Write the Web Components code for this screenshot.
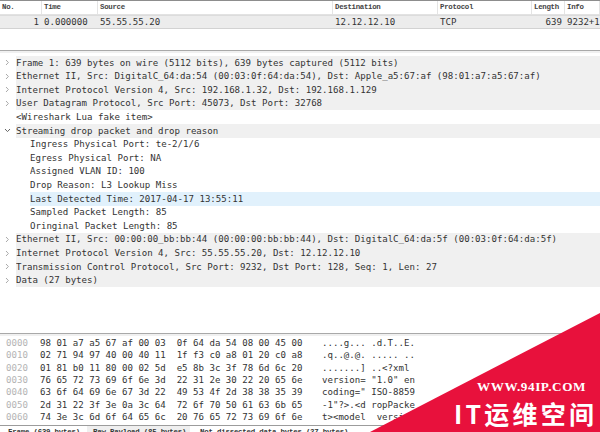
<!DOCTYPE html>
<html>
<head>
<meta charset="utf-8">
<style>
html, body { margin: 0; background: #fff; }
body { width: 600px; height: 432px; overflow: hidden; position: relative; }
</style>
</head>
<body>
<ws-app></ws-app>
<script>
const MONO = `"DejaVu Sans Mono", "Liberation Mono", monospace`;
const esc = s => s.replace(/&/g, '&amp;').replace(/</g, '&lt;').replace(/>/g, '&gt;');

class PacketList extends HTMLElement {
	constructor() {
		super();
		this.attachShadow({ mode: 'open' });
		const cols = ['No.', 'Time', 'Source', 'Destination', 'Protocol', 'Length', 'Info'];
		const vals = ['1', '0.000000', '55.55.55.20', '12.12.12.10', 'TCP', '639', '9232+1'];
		this.shadowRoot.innerHTML = `<style>
			:host { display: block; height: 50px; border-top: 1px solid #8d8d8d; box-sizing: border-box; overflow: hidden; }
			.row { display: grid; grid-template-columns: 42px 56px 235px 105px 94px 33px 35px; }
			.head { height: 14px; background: #fff; border-bottom: 1px solid #e2e2e2; box-sizing: border-box; }
			.head span { font: bold 7.4px/13px "Liberation Mono", monospace; letter-spacing: -.3px; color: #444; padding-left: 2px; border-right: 1px solid #e4e4e4; overflow: hidden; white-space: nowrap; }
			.sel { height: 14px; background: #ececec; border-top: 1px solid #dcdcdc; border-bottom: 1px solid #d2d2d2; box-sizing: border-box; }
			.sel span { font: 9.08px/12px ${MONO}; color: #333; padding-left: 2px; white-space: nowrap; overflow: hidden; }
			.sel .r, .head .r { text-align: right; padding: 0 3px 0 0; }
		</style>
		<div class="row head">${cols.map(c => `<span>${c}</span>`).join('')}</div>
		<div class="row sel">${vals.map((v, i) => `<span class="${i === 0 || i === 5 ? 'r' : ''}">${v}</span>`).join('')}</div>`;
	}
}
customElements.define('ws-packet-list', PacketList);

class Splitter extends HTMLElement {
	constructor() {
		super();
		this.attachShadow({ mode: 'open' });
		this.shadowRoot.innerHTML = `<style>
			:host { display: block; height: 3px; background: #f0f0f0; border-top: 1px solid #a9a9a9; box-sizing: border-box; }
		</style>`;
	}
}
customElements.define('ws-splitter', Splitter);

class TreeRow extends HTMLElement {
	constructor() {
		super();
		this.attachShadow({ mode: 'open' });
		this.shadowRoot.innerHTML = `<style>
			:host { display: flex; align-items: center; height: 13.6px; font: 9.08px/13.6px ${MONO}; color: #333; white-space: pre; }
			:host([tone="grey"]) .text { background: #f0f0f0; }
			:host([tone="blue"]) .text { background: #e1f1fc; }
			.arrow { width: 16px; flex: none; height: 13.6px; background: #fff; display: flex; align-items: center; }
			.text { flex: 1; height: 13.6px; box-sizing: border-box; padding-top: .7px; overflow: hidden; }
			:host([child]) .arrow { width: 30px; }
			svg { margin-left: 4px; }
		</style><div class="arrow"></div><div class="text"><slot></slot></div>`;
	}
	connectedCallback() {
		const arrow = this.shadowRoot.querySelector('.arrow');
		if (this.hasAttribute('child')) return;
		const open = this.hasAttribute('open');
		arrow.innerHTML = open
			? '<svg width="7" height="7" viewBox="0 0 7 7"><path d="M1 2 L3.5 4.6 L6 2" fill="none" stroke="#666" stroke-width="1"/></svg>'
			: '<svg width="7" height="7" viewBox="0 0 7 7"><path d="M2 1 L4.4 3.5 L2 6" fill="none" stroke="#aaa" stroke-width="1"/></svg>';
	}
}
customElements.define('ws-tree-row', TreeRow);

class PacketTree extends HTMLElement {
	constructor() {
		super();
		this.attachShadow({ mode: 'open' });
		this.shadowRoot.innerHTML = `<style>
			:host { display: block; height: 280px; padding-top: 3px; box-sizing: border-box; overflow: hidden; }
		</style><slot></slot>`;
	}
}
customElements.define('ws-packet-tree', PacketTree);

class HexView extends HTMLElement {
	constructor() {
		super();
		this.attachShadow({ mode: 'open' });
		const lines = [
			['0000', '98 01 a7 a5 67 af 00 03  0f 64 da 54 08 00 45 00', '....g... .d.T..E.'],
			['0010', '02 71 94 97 40 00 40 11  1f f3 c0 a8 01 20 c0 a8', '.q..@.@. ..... ..'],
			['0020', '01 81 b0 11 80 00 02 5d  e5 8b 3c 3f 78 6d 6c 20', '.......] ..<?xml '],
			['0030', '76 65 72 73 69 6f 6e 3d  22 31 2e 30 22 20 65 6e', 'version= "1.0" en'],
			['0040', '63 6f 64 69 6e 67 3d 22  49 53 4f 2d 38 38 35 39', 'coding=" ISO-8859'],
			['0050', '2d 31 22 3f 3e 0a 3c 64  72 6f 70 50 61 63 6b 65', '-1"?>.<d ropPacke'],
			['0060', '74 3e 3c 6d 6f 64 65 6c  20 76 65 72 73 69 6f 6e', 't><model  version']
		];
		this.shadowRoot.innerHTML = `<style>
			:host { display: block; height: 88px; padding-top: 1px; box-sizing: border-box; overflow: hidden; font: 9.08px/12.33px ${MONO}; color: #333; white-space: pre; }
			.line { display: flex; height: 12.33px; }
			.off { width: 40px; flex: none; box-sizing: border-box; padding-left: 6px; color: #b4b4b4; }
			.hex { width: 282px; flex: none; }
		</style>${lines.map(l => `<div class="line"><span class="off">${l[0]}</span><span class="hex">${l[1]}</span><span>${esc(l[2])}</span></div>`).join('')}`;
	}
}
customElements.define('ws-hex-view', HexView);

class ByteTabs extends HTMLElement {
	constructor() {
		super();
		this.attachShadow({ mode: 'open' });
		this.shadowRoot.innerHTML = `<style>
			:host { display: flex; height: 7px; margin-top: 1px; border-top: 1px solid #9c9c9c; box-sizing: border-box; overflow: hidden; background: #fff; font: bold 7.4px/11px "Liberation Mono", monospace; letter-spacing: -.2px; color: #333; white-space: nowrap; }
			span { padding: 1px 6px 0 8px; }
			.a { width: 87px; box-sizing: border-box; }
			.b { width: 103px; box-sizing: border-box; padding-left: 6px; background: #efefef; }
			.c { padding-left: 10px; background: #fff; }
		</style><span class="a">Frame (639 bytes)</span><span class="b">Raw Payload (85 bytes)</span><span class="c">Not dissected data bytes (27 bytes)</span>`;
	}
}
customElements.define('ws-byte-tabs', ByteTabs);

class Watermark extends HTMLElement {
	constructor() {
		super();
		this.attachShadow({ mode: 'open' });
		this.shadowRoot.innerHTML = `<style>
			:host { display: block; position: absolute; right: 0; bottom: 0; width: 230px; height: 119px; overflow: hidden; }
			.tri { position: absolute; inset: 0; background: #e8113c; clip-path: polygon(100% 0, 0 100%, 100% 100%); }
			.url { position: absolute; left: 107px; top: 67px; font: bold 13.2px/14px "Liberation Serif", serif; color: #fff; white-space: nowrap; letter-spacing: .55px; }
			.name { position: absolute; left: 84px; top: 83px; font: bold 25px/34px "Noto Sans CJK SC", sans-serif; color: #fff; white-space: nowrap; letter-spacing: 3.2px; }
		</style><div class="tri"></div><div class="url">WWW.94IP.COM</div><div class="name">IT运维空间</div>`;
	}
}
customElements.define('ws-watermark', Watermark);

class App extends HTMLElement {
	constructor() {
		super();
		this.attachShadow({ mode: 'open' });
		this.shadowRoot.innerHTML = `<style>
			:host { display: block; width: 600px; height: 432px; overflow: hidden; }
		</style>
		<ws-packet-list></ws-packet-list>
		<ws-splitter></ws-splitter>
		<ws-packet-tree>
			<ws-tree-row tone="grey">Frame 1: 639 bytes on wire (5112 bits), 639 bytes captured (5112 bits)</ws-tree-row>
			<ws-tree-row tone="grey">Ethernet II, Src: DigitalC_64:da:54 (00:03:0f:64:da:54), Dst: Apple_a5:67:af (98:01:a7:a5:67:af)</ws-tree-row>
			<ws-tree-row tone="grey">Internet Protocol Version 4, Src: 192.168.1.32, Dst: 192.168.1.129</ws-tree-row>
			<ws-tree-row tone="grey">User Datagram Protocol, Src Port: 45073, Dst Port: 32768</ws-tree-row>
			<ws-tree-row child style="margin-left:-14px">&lt;Wireshark Lua fake item&gt;</ws-tree-row>
			<ws-tree-row open tone="grey">Streaming drop packet and drop reason</ws-tree-row>
			<ws-tree-row child>Ingress Physical Port: te-2/1/6</ws-tree-row>
			<ws-tree-row child>Egress Physical Port: NA</ws-tree-row>
			<ws-tree-row child>Assigned VLAN ID: 100</ws-tree-row>
			<ws-tree-row child>Drop Reason: L3 Lookup Miss</ws-tree-row>
			<ws-tree-row child tone="blue">Last Detected Time: 2017-04-17 13:55:11</ws-tree-row>
			<ws-tree-row child>Sampled Packet Length: 85</ws-tree-row>
			<ws-tree-row child>Oringinal Packet Length: 85</ws-tree-row>
			<ws-tree-row tone="grey">Ethernet II, Src: 00:00:00_bb:bb:44 (00:00:00:bb:bb:44), Dst: DigitalC_64:da:5f (00:03:0f:64:da:5f)</ws-tree-row>
			<ws-tree-row tone="grey">Internet Protocol Version 4, Src: 55.55.55.20, Dst: 12.12.12.10</ws-tree-row>
			<ws-tree-row tone="grey">Transmission Control Protocol, Src Port: 9232, Dst Port: 128, Seq: 1, Len: 27</ws-tree-row>
			<ws-tree-row tone="grey">Data (27 bytes)</ws-tree-row>
		</ws-packet-tree>
		<ws-splitter></ws-splitter>
		<ws-hex-view></ws-hex-view>
		<ws-byte-tabs></ws-byte-tabs>`;
	}
}
customElements.define('ws-app', App);

document.body.appendChild(document.createElement('ws-watermark'));
</script>
</body>
</html>
